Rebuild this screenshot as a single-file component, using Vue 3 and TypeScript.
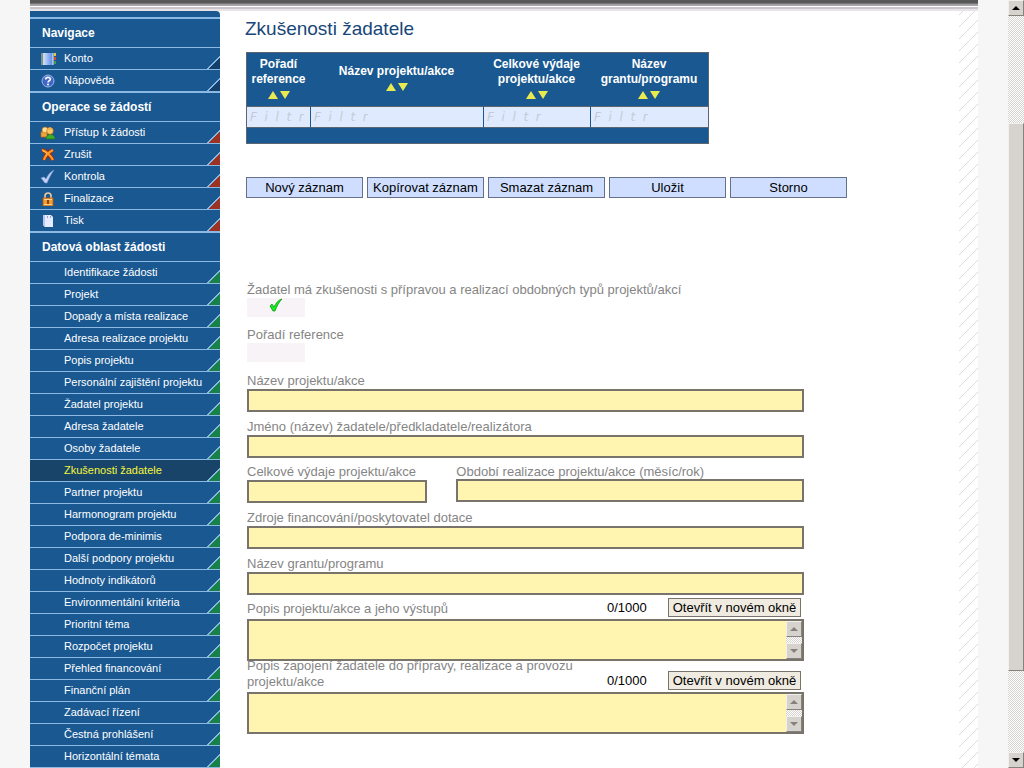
<script setup lang="ts">
import { ref } from 'vue'

interface MenuItem { label: string; icon?: string }
interface MenuSection { title: string; tone: 'navy' | 'red' | 'green'; items: MenuItem[] }

const active = ref('Zkušenosti žadatele')

const sections: MenuSection[] = [
  {
    title: 'Navigace',
    tone: 'navy',
    items: [
      { label: 'Konto', icon: 'book' },
      { label: 'Nápověda', icon: 'help' },
    ],
  },
  {
    title: 'Operace se žádostí',
    tone: 'red',
    items: [
      { label: 'Přístup k žádosti', icon: 'people' },
      { label: 'Zrušit', icon: 'cross' },
      { label: 'Kontrola', icon: 'check' },
      { label: 'Finalizace', icon: 'lock' },
      { label: 'Tisk', icon: 'page' },
    ],
  },
  {
    title: 'Datová oblast žádosti',
    tone: 'green',
    items: [
      'Identifikace žádosti', 'Projekt', 'Dopady a místa realizace', 'Adresa realizace projektu',
      'Popis projektu', 'Personální zajištění projektu', 'Žadatel projektu', 'Adresa žadatele',
      'Osoby žadatele', 'Zkušenosti žadatele', 'Partner projektu', 'Harmonogram projektu',
      'Podpora de-minimis', 'Další podpory projektu', 'Hodnoty indikátorů', 'Environmentální kritéria',
      'Prioritní téma', 'Rozpočet projektu', 'Přehled financování', 'Finanční plán',
      'Zadávací řízení', 'Čestná prohlášení', 'Horizontální témata',
    ].map((label) => ({ label })),
  },
]

const columns: string[][] = [
  ['Pořadí', 'reference'],
  ['Název projektu/akce'],
  ['Celkové výdaje', 'projektu/akce'],
  ['Název', 'grantu/programu'],
]
const filterHint = ['F', 'i', 'l', 't', 'r'].join('\u00a0\u00a0')
const filters = ref<string[]>(['', '', '', ''])

const actions = ['Nový záznam', 'Kopírovat záznam', 'Smazat záznam', 'Uložit', 'Storno']

const form = ref({ name: '', applicant: '', cost: '', period: '', source: '', grant: '' })
const texts = ref([
  { id: 'outputs', label: 'Popis projektu/akce a jeho výstupů', value: '' },
  { id: 'role', label: 'Popis zapojení žadatele do přípravy, realizace a provozu projektu/akce', value: '' },
])
</script>

<template>
  <div class="page">
    <div class="sheet">
      <div class="topbar"></div>
      <div class="columns">
        <nav class="menu" aria-label="Menu">
          <div class="cap"></div>
          <section v-for="s in sections" :key="s.title" :class="s.tone">
            <h2>{{ s.title }}</h2>
            <a
              v-for="i in s.items"
              :key="i.label"
              href="#"
              :class="{ active: i.label === active }"
              @click.prevent="active = i.label"
            >
              <span class="icon">
                <svg v-if="i.icon === 'book'" width="16" height="14" viewBox="0 0 16 14">
                  <defs>
                    <linearGradient id="cover"><stop offset="0" stop-color="#d4e4ff" /><stop offset="1" stop-color="#5585e4" /></linearGradient>
                  </defs>
                  <rect x="3" y="1" width="10" height="12" fill="url(#cover)" />
                  <path d="M1 2h3M1 4h3M1 6h3M1 8h3M1 10h3M1 12h3" stroke="#d8d29a" stroke-width="1" />
                  <rect x="14" y="1" width="2" height="3" fill="#e8c33c" />
                  <rect x="14" y="5" width="2" height="3" fill="#e2462c" />
                  <rect x="14" y="9" width="2" height="3" fill="#3da04a" />
                  <path d="M13 1v12" stroke="#f4f7ff" />
                </svg>
                <svg v-else-if="i.icon === 'help'" width="16" height="14" viewBox="0 0 16 14">
                  <circle cx="8" cy="7" r="6" fill="#4067c6" stroke="#9db6ea" />
                  <path d="M4 4.500a5 5 0 0 1 8 0" fill="none" stroke="#7d9be0" />
                  <path d="M5.700 5.500C5.700 2.800 10.300 2.900 10.300 5.300C10.300 6.900 8 6.700 8 8.600" fill="none" stroke="#fff" stroke-width="1.600" />
                  <circle cx="8" cy="10.500" r="1" fill="#fff" />
                </svg>
                <svg v-else-if="i.icon === 'people'" width="16" height="14" viewBox="0 0 16 14">
                  <path d="M1 11V7c0-3 6-3 6 0v4z" fill="#f0a63c" stroke="#b86a14" stroke-width=".7" />
                  <circle cx="5" cy="4" r="3" fill="#ffdc94" stroke="#b86a14" stroke-width=".7" />
                  <path d="M6 13c0-6 9-6 9 0z" fill="#3fae2c" stroke="#1f7a1a" stroke-width=".7" />
                  <circle cx="10" cy="5" r="3.300" fill="#ffc964" stroke="#b86a14" stroke-width=".7" />
                  <path d="M7 5c0-5 6-5 6 0c-2-2-4-2-6 0z" fill="#f2b04a" />
                </svg>
                <svg v-else-if="i.icon === 'cross'" width="16" height="14" viewBox="0 0 16 14">
                  <path d="M2 2c4 1 8 5 11 10M13 2C9 4 5 8 4 12" fill="none" stroke="#a52d08" stroke-width="4" />
                  <path d="M2 2c4 1 8 5 11 10M13 2C9 4 5 8 4 12" fill="none" stroke="#ff9a26" stroke-width="2.200" />
                  <path d="M3 3c2 1 3 2 4 3" fill="none" stroke="#ffd27a" />
                </svg>
                <svg v-else-if="i.icon === 'check'" width="16" height="14" viewBox="0 0 16 14">
                  <path d="M1 8l3-1 2 2C8 5 10 2 14 0c-3 4-5 8-7 13H5z" fill="#c3d0f4" stroke="#8098d8" stroke-width=".6" />
                </svg>
                <svg v-else-if="i.icon === 'lock'" width="16" height="14" viewBox="0 0 16 14">
                  <path d="M5 7V4c0-4 6-4 6 0v3" fill="none" stroke="#e8c9a0" stroke-width="1.700" />
                  <rect x="3" y="6" width="10" height="8" fill="#f29a35" stroke="#b5600e" stroke-width=".8" />
                  <path d="M4 7.500h8M4 12.500h8" stroke="#ffd08a" />
                  <rect x="7" y="8" width="2" height="4" fill="#8a4408" />
                </svg>
                <svg v-else-if="i.icon === 'page'" width="16" height="14" viewBox="0 0 16 14">
                  <path d="M3 1h8l2 2v10H5l-2-2z" fill="#e6ebff" />
                  <path d="M3 1h2v12l-2-2z" fill="#b9c6f2" />
                  <path d="M7 3h1M10 3h1" stroke="#3c57a8" />
                </svg>
              </span>
              {{ i.label }}
            </a>
          </section>
        </nav>

        <main>
          <h1>Zkušenosti žadatele</h1>

          <table>
            <colgroup><col class="c1" /><col class="c2" /><col class="c3" /><col class="c4" /></colgroup>
            <thead>
              <tr>
                <th v-for="c in columns" :key="c.join()" scope="col">
                  <div v-for="line in c" :key="line">{{ line }}</div>
                  <div class="sort">
                    <button type="button" aria-label="Vzestupně">
                      <svg width="10" height="8" viewBox="0 0 10 8"><path d="M5 0l5 8H0z" fill="#e9ea50" /></svg>
                    </button>
                    <button type="button" aria-label="Sestupně">
                      <svg width="10" height="8" viewBox="0 0 10 8"><path d="M5 8l5-8H0z" fill="#e9ea50" /></svg>
                    </button>
                  </div>
                </th>
              </tr>
            </thead>
            <tbody>
              <tr>
                <td v-for="(c, n) in columns" :key="n">
                  <input v-model="filters[n]" type="text" :placeholder="filterHint" :aria-label="c.join(' ')" />
                </td>
              </tr>
            </tbody>
            <tfoot><tr><td colspan="4"></td></tr></tfoot>
          </table>

          <div class="actions">
            <button v-for="a in actions" :key="a" type="button">{{ a }}</button>
          </div>

          <form @submit.prevent>
            <div class="field readonly">
              <span>Žadatel má zkušenosti s přípravou a realizací obdobných typů projektů/akcí</span>
              <output>
                <svg width="14" height="14" viewBox="0 0 14 14">
                  <path d="M1 8l2-2 2 3C7 5 9 2 13 1C10 4 8 8 6 13H4z" fill="#12ee1c" stroke="#0a8a14" stroke-width=".7" />
                </svg>
              </output>
            </div>
            <div class="field readonly">
              <span>Pořadí reference</span>
              <output></output>
            </div>
            <div class="field first">
              <label for="name">Název projektu/akce</label>
              <input id="name" v-model="form.name" type="text" />
            </div>
            <div class="field">
              <label for="applicant">Jméno (název) žadatele/předkladatele/realizátora</label>
              <input id="applicant" v-model="form.applicant" type="text" />
            </div>
            <div class="pair">
              <div class="field">
                <label for="cost">Celkové výdaje projektu/akce</label>
                <input id="cost" v-model="form.cost" type="text" />
              </div>
              <div class="field">
                <label for="period">Období realizace projektu/akce (měsíc/rok)</label>
                <input id="period" v-model="form.period" type="text" />
              </div>
            </div>
            <div class="field">
              <label for="source">Zdroje financování/poskytovatel dotace</label>
              <input id="source" v-model="form.source" type="text" />
            </div>
            <div class="field">
              <label for="grant">Název grantu/programu</label>
              <input id="grant" v-model="form.grant" type="text" />
            </div>
            <div v-for="t in texts" :key="t.id" class="long" :class="t.id">
              <div class="head">
                <label :for="t.id">{{ t.label }}</label>
                <span class="count">{{ t.value.length }}/1000</span>
                <button type="button">Otevřít v novém okně</button>
              </div>
              <div class="area">
                <textarea :id="t.id" v-model="t.value" maxlength="1000"></textarea>
                <div class="bar off" aria-hidden="true">
                  <i><svg width="8" height="4" viewBox="0 0 8 4"><path d="M4 0l4 4H0z" fill="#85827b" /></svg></i>
                  <b></b>
                  <i><svg width="8" height="4" viewBox="0 0 8 4"><path d="M4 4l4-4H0z" fill="#85827b" /></svg></i>
                </div>
              </div>
            </div>
          </form>
        </main>
        <div class="hatch"></div>
      </div>
    </div>

    <div class="bar window" aria-hidden="true">
      <i><svg width="8" height="4" viewBox="0 0 8 4"><path d="M4 0l4 4H0z" fill="#000" /></svg></i>
      <b class="before"></b>
      <b class="thumb"></b>
      <b class="after"></b>
      <i><svg width="8" height="4" viewBox="0 0 8 4"><path d="M4 4l4-4H0z" fill="#000" /></svg></i>
    </div>
  </div>
</template>

<style>
body { background: #f6f6f6; }
</style>

<style scoped>
* { box-sizing: border-box; }
.page {
  display: flex;
  min-height: 100vh;
  padding-left: 30px;
  font-family: "Liberation Sans", Arial, sans-serif;
  font-size: 13px;
}
button, input, textarea { font: inherit; margin: 0; border-radius: 0; }
.sheet { flex: 1; display: flex; flex-direction: column; margin-right: 30px; background: #fff; }
.topbar {
  height: 11px;
  background: linear-gradient(#575757 3px, #777 3px 4px, #a09ca0 4px 5px, #aaa6aa 5px 6px, #fff 6px 7px, #cac4ca 7px 9px, #e7e3e7 9px 11px);
}
.columns { flex: 1; display: flex; }

.menu { width: 190px; background: #195891; border-top-right-radius: 4px; color: #fff; }
.cap { height: 7px; border-bottom: 1px solid #8bb9e3; }
h2 {
  margin: 0;
  padding-left: 12px;
  height: 30px;
  line-height: 29px;
  font-size: 12px;
  border: 0 solid #8bb9e3;
  border-width: 1px 0;
}
.menu a {
  display: flex;
  gap: 8px;
  padding-left: 10px;
  height: 22px;
  line-height: 21px;
  font-size: 11px;
  color: #fff;
  text-decoration: none;
  border-bottom: 1px solid #8bb9e3;
  background: linear-gradient(135deg, transparent 48%, #8bb9e3 48%, #8bb9e3 54%, var(--tone) 54%) right bottom / 13px 13px no-repeat;
}
.navy { --tone: #153f6b; }
.red { --tone: #9b3324; }
.green { --tone: #16824a; }
.menu a.active { color: #f6f63c; background-color: #184469; }
.icon { width: 16px; display: flex; align-items: center; }

main { flex: 1; padding: 6px 0 34px 25px; }
h1 { margin: 0; font-size: 19px; line-height: 24px; font-weight: normal; color: #184678; }

table {
  width: 463px;
  margin: 11px 0 0 1px;
  table-layout: fixed;
  border-collapse: separate;
  border-spacing: 0;
  border: 1px solid #5c6670;
  background: #195891;
}
.c1 { width: 63px; }
.c2 { width: 173px; }
.c3 { width: 107px; }
.c4 { width: 118px; }
th { height: 53px; padding: 0; font-size: 12px; line-height: 15px; color: #fff; vertical-align: middle; white-space: nowrap; }
.sort { display: flex; justify-content: center; gap: 2px; height: 16px; align-items: center; }
.sort button { display: flex; padding: 0; border: 0; background: none; }
td { padding: 0; }
tbody td { height: 22px; border: 0 solid #5c6670; border-width: 1px 0; background: #dfeafe; }
tbody td + td { border-left: 1px solid #195891; }
tbody input {
  display: block;
  width: 100%;
  height: 20px;
  padding: 0 0 0 3px;
  border: 0;
  background: #dfeafe;
  font: italic 12px "DejaVu Sans", sans-serif;
}
tbody input::placeholder { color: #c5cbd8; opacity: 1; }
tfoot td { height: 15px; }

.actions { display: flex; flex-wrap: wrap; gap: 4px; margin: 33px 0 84px 1px; }
.actions button { width: 117px; height: 21px; padding: 0; border: 1px solid #65708a; background: #cfdeff; color: #000; white-space: nowrap; }

form { max-width: 559px; padding-left: 2px; }
.field { display: flex; flex-direction: column; margin-bottom: 7px; line-height: 16px; color: #858585; }
.field input { width: 100%; height: 23px; padding: 0 3px; border: 2px solid #78746c; background: #fff5b0; }
.readonly { margin-bottom: 10px; }
.readonly output { width: 58px; height: 19px; display: flex; justify-content: center; align-items: flex-start; background: #f7f3f7; }
.first { margin-top: 11px; }
.pair { display: grid; grid-template-columns: 180fr 347fr; gap: 29px; margin-top: -1px; }
.pair .field + .field { line-height: 15px; }
.head { display: grid; grid-template-columns: 1fr 61px 136px; align-items: end; align-content: end; color: #858585; padding-bottom: 2px; }
.head label { max-width: 340px; line-height: 16px; }
.outputs .head { height: 24px; margin-top: -7px; }
.role .head { height: 31px; }
.count { color: #000; line-height: 19px; }
.head button { width: 133px; height: 19px; padding: 0; border: 1px solid #78746c; background: #efebe0; color: #000; line-height: 17px; white-space: nowrap; }
.area { display: flex; height: 42px; border: 2px solid #78746c; background: #fff5b0; }
textarea { flex: 1; padding: 1px 3px; border: 0; resize: none; overflow: hidden; background: #fff5b0; }

.bar { width: 16px; display: flex; flex-direction: column; }
.bar i { height: 16px; display: flex; align-items: center; justify-content: center; }
.bar i, .thumb { background: #d6d3ce; border: 1px solid; border-color: #f2f0ec #85827c #85827c #f2f0ec; }
.bar b { flex: 1; background: conic-gradient(#d6d3ce 25%, #fff 25% 50%, #d6d3ce 50% 75%, #fff 75%) 0 0 / 2px 2px; }
.window { position: sticky; top: 0; height: 100vh; }
.bar .before { flex: 107; }
.bar .thumb { flex: 548; background: #d6d3ce; }
.bar .after { flex: 81; }

.hatch { width: 19px; background: linear-gradient(135deg, transparent 47%, #dcdcdc 47%, #dcdcdc 53%, transparent 53%) 0 4px / 12px 12px; }
</style>
